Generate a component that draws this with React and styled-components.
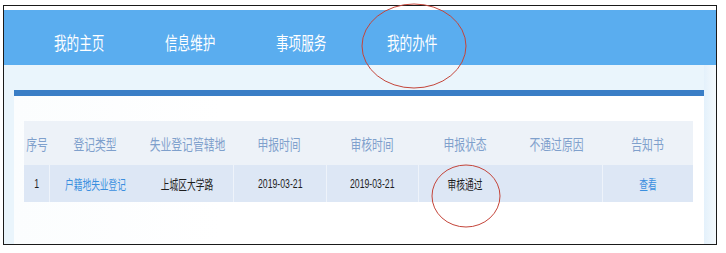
import styled, { createGlobalStyle } from "styled-components"

const GlobalStyle = createGlobalStyle`
    body {
        margin: 0;
        background: #ffffff;
        font-family: "Noto Sans CJK SC", "Noto Sans", sans-serif;
    }
`

const navItems = ["我的主页", "信息维护", "事项服务", "我的办件"]

const columns = [
    { title: "序号", width: 25 },
    { title: "登记类型", width: 92 },
    { title: "失业登记管辖地", width: 92 },
    { title: "申报时间", width: 93 },
    { title: "审核时间", width: 92 },
    { title: "申报状态", width: 94 },
    { title: "不通过原因", width: 90 },
    { title: "告知书", width: 91 },
]

// sep: white divider on the left of the cell, as seen in the screenshot
const row = [
    { text: "1" },
    { text: "户籍地失业登记", link: true, sep: true },
    { text: "上城区大学路" },
    { text: "2019-03-21", sep: true },
    { text: "2019-03-21", sep: true },
    { text: "审核通过", sep: true },
    { text: "" },
    { text: "查看", link: true, sep: true },
]

const App = () => {
    return (
        <Page>
            <GlobalStyle />
            <Frame>
                <Nav>
                    {navItems.map((item) => (
                        <NavItem key={item}>
                            <Squeezed>{item}</Squeezed>
                        </NavItem>
                    ))}
                </Nav>
                <Body>
                    <Panel>
                        <Bar />
                        <Content>
                            <Table>
                                {columns.map((c) => (
                                    <HeadCell key={c.title}>
                                        <Squeezed>{c.title}</Squeezed>
                                    </HeadCell>
                                ))}
                                {row.map((c, i) => (
                                    <DataCell key={i} $sep={c.sep} $link={c.link}>
                                        <Squeezed>{c.text}</Squeezed>
                                    </DataCell>
                                ))}
                            </Table>
                        </Content>
                    </Panel>
                    <SideStrip />
                </Body>
            </Frame>
            <Marks width="726" height="253">
                <ellipse cx="414" cy="46" rx="52" ry="42" />
                <ellipse cx="466" cy="196" rx="34" ry="31" />
            </Marks>
        </Page>
    )
}

export default App

const Page = styled.div`
    position: relative;
    width: 726px;
    height: 253px;
    padding: 5px 0 0 3px;
    box-sizing: border-box;
`

const Frame = styled.div`
    width: 714px;
    height: 240px;
    box-sizing: border-box;
    border: 1px solid #1a1a1a;
    padding-top: 4px;
    display: flex;
    flex-direction: column;
    background: #ffffff;
`

const Nav = styled.div`
    height: 55px;
    background: #5aadef;
    display: flex;
    align-items: center;
    padding: 8px 0 0 50px;
    box-sizing: border-box;
`

const NavItem = styled.div`
    width: 111px;
    font-size: 18px;
    color: #ffffff;

    span {
        transform: scaleX(0.7);
        transform-origin: left center;
    }
`

const Squeezed = styled.span`
    display: inline-block;
    white-space: nowrap;
`

const Body = styled.div`
    flex: 1;
    display: flex;
    background: #eaf5fc;
    padding: 25px 0 0 10px;
`

const Panel = styled.div`
    width: 690px;
    display: flex;
    flex-direction: column;
    background: #ffffff;
`

const Bar = styled.div`
    height: 6px;
    background: #3a7ec6;
`

const Content = styled.div`
    flex: 1;
    padding: 25px 0 0 10px;
    background: linear-gradient(90deg, #fbfdfe, #ffffff 30%);
`

const SideStrip = styled.div`
    flex: 1;
    margin-top: -25px;
    background: linear-gradient(90deg, #e4f1fb, #f4f9fd);
`

const Table = styled.div`
    display: grid;
    grid-template-columns: ${columns.map((c) => c.width + "px").join(" ")};
    grid-template-rows: 44px 37px;
`

const HeadCell = styled.div`
    background: #edf2f8;
    color: #7fa0cc;
    font-size: 15px;
    display: flex;
    align-items: center;
    justify-content: center;

    span {
        transform: scaleX(0.72);
    }
`

const DataCell = styled.div`
    background: #dde7f5;
    border-left: 1px solid ${(p) => (p.$sep ? "#eef3fa" : "#dde7f5")};
    color: ${(p) => (p.$link ? "#3a8fdf" : "#1e1e1e")};
    font-size: 13px;
    font-family: "Liberation Sans", "Noto Sans CJK SC", sans-serif;
    display: flex;
    align-items: center;
    justify-content: center;

    span {
        transform: scaleX(0.67);
    }
`

const Marks = styled.svg`
    position: absolute;
    left: 0;
    top: 0;
    pointer-events: none;

    ellipse {
        fill: none;
        stroke: #c4453a;
        stroke-width: 1;
    }
`
